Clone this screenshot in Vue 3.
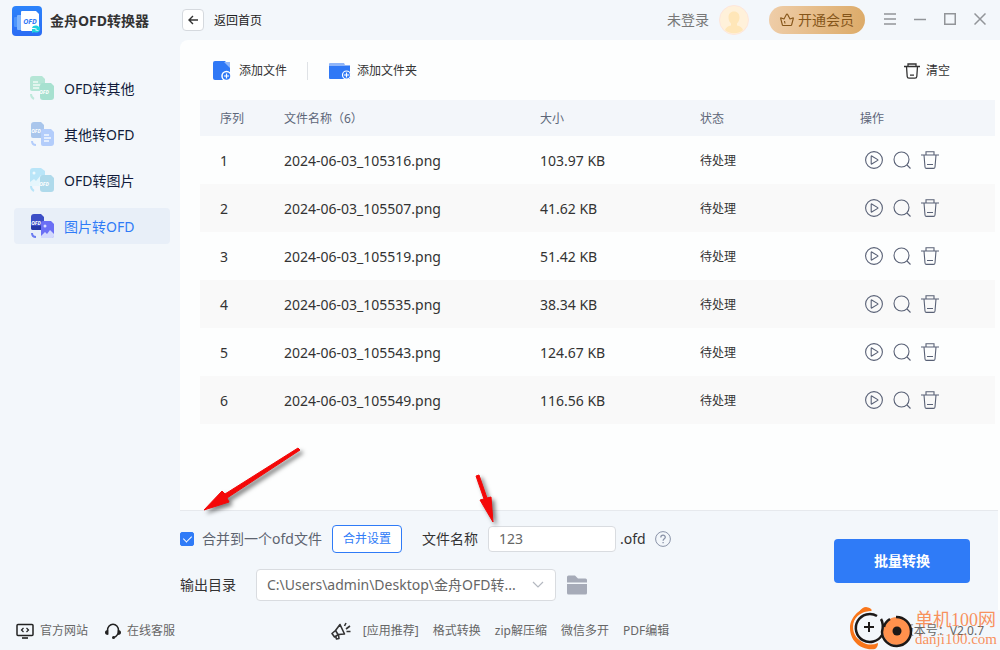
<script setup>
import { ref } from 'vue'

const menu = [
  { label: 'OFD转其他', icon: 'ofd-other' },
  { label: '其他转OFD', icon: 'other-ofd' },
  { label: 'OFD转图片', icon: 'ofd-image' },
  { label: '图片转OFD', icon: 'image-ofd' }
]
const active = ref(3)

const files = ref([
  { name: '2024-06-03_105316.png', size: '103.97 KB', status: '待处理' },
  { name: '2024-06-03_105507.png', size: '41.62 KB', status: '待处理' },
  { name: '2024-06-03_105519.png', size: '51.42 KB', status: '待处理' },
  { name: '2024-06-03_105535.png', size: '38.34 KB', status: '待处理' },
  { name: '2024-06-03_105543.png', size: '124.67 KB', status: '待处理' },
  { name: '2024-06-03_105549.png', size: '116.56 KB', status: '待处理' }
])

const merge = ref(true)
const fileName = ref('123')
const apps = ['[应用推荐]', '格式转换', 'zip解压缩', '微信多开', 'PDF编辑']
</script>

<template>
  <div class="app">
    <header class="titlebar">
      <div class="brand">
        <svg class="logo" viewBox="0 0 30 30" aria-hidden="true">
          <defs>
            <linearGradient id="lg-logo" x1="0" y1="0" x2="0" y2="1">
              <stop offset="0" stop-color="#2b83fb" /><stop offset="1" stop-color="#2b6cf4" />
            </linearGradient>
          </defs>
          <rect width="30" height="30" rx="4" fill="url(#lg-logo)" />
          <rect x="2" y="11" width="4" height="10" rx="1" fill="#4d95fb" />
          <rect x="5" y="9" width="6" height="15" rx="1" fill="#7db4fd" />
          <path d="M10 5h14l3 3v16a1 1 0 0 1-1 1H10a1 1 0 0 1-1-1V6a1 1 0 0 1 1-1z" fill="#fff" />
          <text x="18" y="18" text-anchor="middle" class="logo-text">OFD</text>
          <path d="M20 22c1-3 5-3 7-1l1-1v4h-4l1-1c-1-1-3-1-4-1zM28 24c-1 3-5 3-6 2l-2 1v-4h4l-1 1c1 1 3 1 5 0z" fill="#1fd2df" />
        </svg>
        <strong>金舟OFD转换器</strong>
      </div>
      <button class="back" type="button">
        <span class="back-box">
          <svg width="12" height="12" viewBox="0 0 12 12"><path d="M6 2 2 6l4 4M2 6h9" fill="none" stroke="#333" stroke-width="1.4" /></svg>
        </span>
        <span class="label">返回首页</span>
      </button>
      <div class="account">
        <a href="#" class="login">未登录</a>
        <svg class="avatar" viewBox="0 0 30 30" aria-hidden="true">
          <circle cx="15" cy="15" r="14.5" fill="#fff1da" stroke="#fde6dc" />
          <path d="M15 6.500c3.500 0 5.500 2.500 5.500 6 0 2.500-1 4.500-2.500 6v2c3 .5 5 2 6 4.500a14 14 0 0 1-18 0c1-2.500 3-4 6-4.500v-2c-1.500-1.500-2.500-3.500-2.500-6 0-3.500 2-6 5.500-6z" fill="#ffe6b8" />
        </svg>
        <button class="vip" type="button">
          <svg width="14" height="14" viewBox="0 0 14 14"><path d="M3 12.500q-.5 0-.6-.5L.7 5.500q-.2-.9.600-.6L4 6 6.400 1.400q.6-.8 1.200 0L10 6l2.700-1.100q.8-.3.600.6L11.600 12q-.1.500-.6.500zM4.500 8l.5 2.500" fill="none" stroke="#855519" stroke-width="1.100" stroke-linejoin="round" /></svg>
          开通会员
        </button>
        <div class="window-buttons">
          <button type="button" aria-label="菜单"><svg width="12" height="12" viewBox="0 0 12 12"><path d="M0 1h12M0 6h12M0 11h12" /></svg></button>
          <button type="button" aria-label="最小化"><svg width="12" height="12" viewBox="0 0 12 12"><path d="M0 6.500h12" /></svg></button>
          <button type="button" aria-label="最大化"><svg width="12" height="12" viewBox="0 0 12 12"><path d="M.75.75h10.500v10.500H.75z" /></svg></button>
          <button type="button" aria-label="关闭"><svg width="12" height="12" viewBox="0 0 12 12"><path d="m.5.500 11 11M11.500.500l-11 11" /></svg></button>
        </div>
      </div>
    </header>

    <div class="body">
      <nav class="sidebar">
        <button
          v-for="(item, i) in menu"
          :key="item.label"
          type="button"
          class="menu-item"
          :class="{ active: i === active }"
          @click="active = i"
        >
          <svg v-if="item.icon === 'ofd-other'" width="24" height="24" viewBox="0 0 24 24">
            <path d="M3 0h9l3 3v12H2a2 2 0 0 1-2-2V3a3 3 0 0 1 3-3z" fill="#b5e6d6" />
            <path d="M3 6h5M3 9h8M3 12h6" stroke="#f0faf6" stroke-width="1.500" />
            <path d="M13 7h8l3 3v11a3 3 0 0 1-3 3h-8a3 3 0 0 1-3-3V10a3 3 0 0 1 3-3z" fill="#a7e1d0" />
            <text x="14" y="18" text-anchor="middle" class="tag">OFD</text>
            <path d="M1 18c0 3 1 4 3 5" fill="none" stroke="#bfe9dc" stroke-width="2" />
          </svg>
          <svg v-else-if="item.icon === 'other-ofd'" width="24" height="24" viewBox="0 0 24 24">
            <path d="M4 0h7l3 3v13H3a2 2 0 0 1-2-2V3a3 3 0 0 1 3-3z" fill="#a9c6ec" />
            <text x="6" y="11" text-anchor="middle" class="tag">OFD</text>
            <path d="M13 7h8l3 3v11a3 3 0 0 1-3 3h-8a2 2 0 0 1-2-2V9a2 2 0 0 1 2-2z" fill="#b3cdfb" />
            <path d="M14 13h5M14 16h7M14 19h5" stroke="#f5f9ff" stroke-width="1.500" />
            <path d="M2 19c0 3 1 4 4 4" fill="none" stroke="#b3cdfb" stroke-width="2" />
          </svg>
          <svg v-else-if="item.icon === 'ofd-image'" width="24" height="24" viewBox="0 0 24 24">
            <path d="M3 0h8l4 3v12H0V3a3 3 0 0 1 3-3z" fill="#b9e5f8" />
            <circle cx="4" cy="5" r="1.500" fill="#eef9fe" />
            <path d="m0 14 4-3 2 2 5-6 4 5v6H0z" fill="#e6f6fc" />
            <path d="M13 7h8l3 3v11a3 3 0 0 1-3 3h-8a3 3 0 0 1-3-3V10a3 3 0 0 1 3-3z" fill="#afdaeb" />
            <text x="14" y="18" text-anchor="middle" class="tag">OFD</text>
            <path d="M1 18c0 3 1 4 3 5" fill="none" stroke="#b9e5f8" stroke-width="2" />
          </svg>
          <svg v-else width="24" height="24" viewBox="0 0 24 24">
            <path d="M4 0h7l3 3v13H3a2 2 0 0 1-2-2V3a3 3 0 0 1 3-3z" fill="#3c4ec6" />
            <path d="M1 12h13v4H3a2 2 0 0 1-2-2z" fill="#2739a8" />
            <text x="6" y="11" text-anchor="middle" class="tag">OFD</text>
            <path d="M13 7h8l3 3v11a3 3 0 0 1-3 3H11V9a2 2 0 0 1 2-2z" fill="#6b6ff5" />
            <circle cx="15" cy="12" r="1.500" fill="#d8dcff" />
            <path d="m11 22 4-4 2 2 3-4 4 4v2a2 2 0 0 1-2 2H11z" fill="#d3d9fd" />
            <path d="M2 19c0 3 1 4 4 4" fill="none" stroke="#6b7cf0" stroke-width="2" />
          </svg>
          <span class="label">{{ item.label }}</span>
        </button>
      </nav>

      <main class="main">
        <div class="toolbar">
          <button type="button" class="tool">
            <svg width="18" height="20" viewBox="0 0 18 20">
              <path d="M2 0h10l5 6v12a1 1 0 0 1-1 1H2a2 2 0 0 1-2-2V2a2 2 0 0 1 2-2z" fill="#2f78f6" />
              <path d="M11 1h6v6z" fill="#94b9f9" />
              <circle cx="13.500" cy="15" r="4.500" fill="#2f78f6" stroke="#fff" stroke-width="1.500" />
              <path d="M11 15h5M13.500 12.500v5" stroke="#fff" stroke-width="1.200" />
            </svg>
            添加文件
          </button>
          <span class="divider"></span>
          <button type="button" class="tool folder">
            <svg width="22" height="18" viewBox="0 0 22 18">
              <path d="M1 1h14l1 2h5v6H0V2a1 1 0 0 1 1-1z" fill="#8fb5f9" />
              <path d="M0 4h21v12a1 1 0 0 1-1 1H1a1 1 0 0 1-1-1z" fill="#2f78f6" />
              <circle cx="17.500" cy="13" r="4" fill="#2f78f6" stroke="#fff" stroke-width="1.200" />
              <path d="M15 13h5M17.500 10.500v5" stroke="#fff" stroke-width="1.200" />
            </svg>
            添加文件夹
          </button>
          <button type="button" class="tool clear">
            <svg width="16" height="16" viewBox="0 0 16 16"><path d="M0 3.500h16M4 3V1h8v2M2.500 3.500l.7 10q.1 1.700 1.800 1.700h6q1.700 0 1.800-1.700l.7-10M6 12.200h4" fill="none" stroke="#333" stroke-width="1.300" /></svg>
            清空
          </button>
        </div>

        <table class="files">
          <colgroup><col class="c-no" /><col class="c-name" /><col class="c-mid" /><col class="c-mid" /><col /></colgroup>
          <thead>
            <tr><th>序列</th><th>文件名称（{{ files.length }}）</th><th>大小</th><th>状态</th><th>操作</th></tr>
          </thead>
          <tbody>
            <tr v-for="(f, i) in files" :key="f.name">
              <td>{{ i + 1 }}</td>
              <td>{{ f.name }}</td>
              <td>{{ f.size }}</td>
              <td class="status">{{ f.status }}</td>
              <td class="action-cell">
                <div class="actions">
                  <button type="button" aria-label="开始"><svg width="18" height="18" viewBox="0 0 18 18"><circle cx="9" cy="9" r="8.400" /><path d="M6.200 5.200v7.600q0 .5.500.2l6-3.600q.5-.4 0-.8l-6-3.600q-.5-.3-.5.2z" /></svg></button>
                  <button type="button" aria-label="预览"><svg width="18" height="18" viewBox="0 0 18 18"><circle cx="8.500" cy="8.500" r="7.500" /><path d="m14 14 3.500 3.500" /></svg></button>
                  <button type="button" aria-label="删除"><svg width="18" height="18" viewBox="0 0 18 18"><path d="M0 4h18M5 4V.800h8V4M3 4l1 12q.1 1.400 1.500 1.400h7q1.400 0 1.500-1.400L15 4M6 13.500h6" /></svg></button>
                </div>
              </td>
            </tr>
          </tbody>
        </table>

        <section class="settings">
          <div class="fields">
            <div class="row">
              <label class="merge"><input v-model="merge" type="checkbox" />合并到一个ofd文件</label>
              <button type="button" class="merge-set">合并设置</button>
              <label for="file-name">文件名称</label>
              <input id="file-name" v-model="fileName" class="name-input" type="text" />
              <span class="ext">.ofd</span>
              <button type="button" aria-label="帮助">
                <svg width="16" height="16" viewBox="0 0 16 16"><circle cx="8" cy="8" r="7.400" fill="none" stroke="#8a93a8" /><path d="M5.800 6.400c0-3 4.500-3 4.500-.2 0 1.600-2.200 1.600-2.200 3.500M8.100 11v1.300" fill="none" stroke="#8a93a8" stroke-width="1.300" /></svg>
              </button>
            </div>
            <div class="row second">
              <label for="out-dir" class="dir-label">输出目录</label>
              <div class="select-box">
                <select id="out-dir"><option>C:\Users\admin\Desktop\金舟OFD转...</option></select>
                <svg width="12" height="8" viewBox="0 0 12 8"><path d="m1 1 5 5 5-5" fill="none" stroke="#b4b8c0" stroke-width="1.200" /></svg>
              </div>
              <button type="button" aria-label="打开目录">
                <svg width="20" height="20" viewBox="0 0 20 20"><path d="M1.500.500h6.500l3 3h7.500a1.500 1.500 0 0 1 1.500 1.500v2.500H0V2A1.500 1.500 0 0 1 1.500.500zM0 9h20v9a1.500 1.500 0 0 1-1.500 1.500h-17A1.500 1.500 0 0 1 0 18z" fill="#a6abb8" /></svg>
              </button>
            </div>
          </div>
          <button type="button" class="convert">批量转换</button>
        </section>
      </main>
    </div>

    <footer class="footer">
      <div class="links">
        <a href="#">
          <svg width="18" height="16" viewBox="0 0 18 16"><rect x="1" y="1.500" width="16" height="11" rx="1" fill="none" stroke="#222" stroke-width="1.500" /><path d="M6 15h6" stroke="#222" stroke-width="1.600" /><path d="M7.500 5 5.500 7l2 2M10.500 5l2 2-2 2" fill="none" stroke="#222" stroke-width="1.200" /></svg>
          官方网站
        </a>
        <a href="#">
          <svg width="16" height="16" viewBox="0 0 16 16"><path d="M2.500 11V7.500a5.500 6.200 0 0 1 11 0c0 4-1.500 6-5 7" fill="none" stroke="#222" stroke-width="1.500" /><path d="M3.300 7v5C.800 12 0 11 0 9.500S.800 7 3.300 7zM12.700 7v5c2.500 0 3.300-1 3.300-2.500S15.200 7 12.700 7z" fill="#222" /><circle cx="8.500" cy="14.500" r="1.500" fill="#222" /></svg>
          在线客服
        </a>
      </div>
      <div class="apps">
        <svg width="20" height="18" viewBox="0 0 20 18"><g fill="none" stroke="#333" stroke-width="1.600" stroke-linejoin="round"><path d="M9 2.500 13.500 12l-6 .5-4 2.500L1 11.500 4.500 8.500z" /><path d="m4.500 14 1 3 2.500-.5-.5-3.500M4.500 8.500l2.500 4M13.500 4 15 1M15 7l4-3M15.500 9.500h4" /></g></svg>
        <a v-for="a in apps" :key="a" href="#">{{ a }}</a>
      </div>
      <span class="version">版本号：V2.0.7</span>
    </footer>

    <svg class="arrow arrow-left" width="110" height="76" viewBox="0 0 110 76" aria-hidden="true">
      <path d="M102 2 29 48 26 45 8 64 33 56 31 52 104 4z" fill="#f40808" stroke="#f40808" stroke-linejoin="round" />
    </svg>
    <svg class="arrow arrow-right" width="36" height="60" viewBox="0 0 36 60" aria-hidden="true">
      <path d="M6 5 14 28 10 29 23 51 21 26 17 27 9 4z" fill="#f40808" stroke="#f40808" stroke-linejoin="round" />
    </svg>

    <div class="watermark">
      <svg width="64" height="44" viewBox="0 0 64 44" aria-hidden="true">
        <path d="M21 3C16-1 0 8 0 22c0 13 11 23 25 21q3-2 3-6c-5 2-10 2-14 0C8 34 3 29 3 21 3 12 10 6 19 5z" fill="#f9761a" />
        <path d="M9 6q6-9 13-2l-1 1z" fill="#f9761a" />
        <path d="M27 10a14 14 0 1 0 5 19" fill="none" stroke="#1c1918" stroke-width="2.500" />
        <path d="M14 21h10M19 16v10" stroke="#1c1918" stroke-width="2" />
        <circle cx="47" cy="25" r="14" fill="#ff914d" />
        <path d="M31 13q3 5 1 13a14.500 14.500 0 1 0 14-15M34 21q1-5 6-8" fill="none" stroke="#1c1918" stroke-width="2.500" />
        <circle cx="47" cy="25" r="4.500" fill="#1c1918" />
      </svg>
      <div class="watermark-text"><span>单机100网</span><span class="domain">danji100.com</span></div>
    </div>
  </div>
</template>

<style>
body {
  margin: 0;
}
</style>

<style scoped>
.app {
  position: relative;
  display: flex;
  flex-direction: column;
  min-height: 100vh;
  overflow: hidden;
  background: #f3f7fb;
  color: #333;
  font: 12px/18px "Noto Sans", "Noto Sans CJK SC", sans-serif;
}
.app * {
  box-sizing: border-box;
}
button,
input,
select {
  margin: 0;
  padding: 0;
  border: 0;
  background: none;
  color: inherit;
  font: inherit;
}
a {
  color: inherit;
  text-decoration: none;
}
svg {
  display: block;
  flex: none;
}
.label {
  padding-top: 2px;
}

.titlebar {
  display: flex;
  align-items: center;
  height: 40px;
  padding-right: 14px;
}
.brand {
  display: flex;
  align-items: center;
  gap: 8px;
  width: 180px;
  padding: 2px 0 0 12px;
  font-size: 14px;
}
.logo {
  width: 30px;
  height: 30px;
}
.logo-text {
  fill: #2f78f6;
  font: italic bold 7px "Noto Sans", sans-serif;
}
.back {
  display: flex;
  align-items: center;
  gap: 10px;
  padding-left: 2px;
  color: #222;
}
.back-box {
  display: grid;
  place-items: center;
  width: 22px;
  height: 22px;
  border: 1px solid #d5d9de;
  border-radius: 4px;
  background: #fff;
}
.account {
  display: flex;
  align-items: center;
  margin-left: auto;
  font-size: 14px;
}
.login {
  color: #777;
}
.avatar {
  width: 30px;
  height: 30px;
  margin: 0 20px 0 10px;
}
.vip {
  display: flex;
  align-items: center;
  gap: 4px;
  height: 28px;
  padding: 0 11px;
  border-radius: 14px;
  background: linear-gradient(100deg, #efceaa, #dcaa67);
  color: #855519;
}
.window-buttons {
  display: flex;
  gap: 18px;
  margin-left: 19px;
  padding-bottom: 2px;
}
.window-buttons svg {
  fill: none;
  stroke: #929599;
  stroke-width: 1.5;
}

.body {
  display: flex;
  flex: 1;
}
.sidebar {
  display: flex;
  flex-direction: column;
  gap: 10px;
  width: 180px;
  padding: 30px 10px 0 14px;
}
.menu-item {
  display: flex;
  align-items: center;
  gap: 10px;
  height: 36px;
  padding-left: 16px;
  border-radius: 4px;
  color: #111b3a;
  font-size: 14px;
}
.menu-item.active {
  background: #e8eff8;
  color: #2f7bf7;
}
.tag {
  fill: #fff;
  font: italic bold 5px "Noto Sans", sans-serif;
}

.main {
  display: flex;
  flex: 1;
  flex-direction: column;
  min-width: 0;
  border-top-left-radius: 8px;
  background: #fdfefe;
}
.toolbar {
  display: flex;
  align-items: center;
  height: 60px;
  padding: 2px 50px 0 33px;
}
.tool {
  display: flex;
  align-items: center;
  gap: 8px;
}
.divider {
  width: 1px;
  height: 18px;
  margin: 0 21px 0 20px;
  background: #dfe2e6;
}
.clear {
  margin-left: auto;
}
.folder,
.clear {
  gap: 6px;
}

.files {
  margin: 0 5px 0 20px;
  border-collapse: collapse;
  table-layout: fixed;
}
.c-no {
  width: 64px;
}
.c-name {
  width: 256px;
}
.c-mid {
  width: 160px;
}
.files th {
  height: 36px;
  padding: 2px 0 0 20px;
  background: #f3f6fa;
  color: #5d6679;
  font-weight: 400;
  text-align: left;
}
.files td {
  height: 48px;
  padding: 2px 0 0 20px;
  font-size: 14px;
}
.files tbody tr:nth-child(even) {
  background: #f9f9f9;
}
.files .status {
  font-size: 12px;
}
.files .action-cell {
  padding-top: 0;
}
.actions {
  display: flex;
  gap: 10px;
  padding-left: 5px;
}
.actions svg {
  fill: none;
  stroke: #596176;
  stroke-width: 1.1;
}

.settings {
  display: flex;
  align-items: center;
  justify-content: space-between;
  height: 100px;
  margin: auto 2px 0 0;
  padding-right: 28px;
  border-top: 1px solid #e6e9ed;
  background: #f3f7fb;
}
.fields {
  padding-top: 4px;
}
.row {
  display: flex;
  align-items: center;
  height: 28px;
  font-size: 14px;
}
.second {
  height: 32px;
  margin-top: 16px;
}
.merge {
  display: flex;
  align-items: center;
  gap: 8px;
  color: #5d6470;
}
.merge input {
  display: grid;
  place-items: center;
  width: 14px;
  height: 14px;
  border: 1px solid #2f7bf7;
  border-radius: 2px;
  appearance: none;
}
.merge input:checked {
  background: #2f7bf7;
}
.merge input:checked::before {
  width: 4px;
  height: 7px;
  margin-bottom: 2px;
  border: solid #fff;
  border-width: 0 1px 1px 0;
  content: "";
  transform: rotate(45deg);
}
.merge-set {
  width: 70px;
  height: 28px;
  margin: 0 20px 0 10px;
  border: 1px solid #2f7bf7;
  border-radius: 4px;
  background: #fff;
  color: #2f7bf7;
  font-size: 12px;
}
.name-input {
  width: 128px;
  height: 26px;
  margin: 0 4px 0 10px;
  padding: 0 10px;
  border: 1px solid #d9dce0;
  border-radius: 4px;
  background: #fff;
  color: #666;
}
.ext {
  margin-right: 9px;
}
.dir-label {
  width: 76px;
}
.select-box {
  display: grid;
  align-items: center;
  width: 300px;
  margin-right: 11px;
}
.select-box select,
.select-box svg {
  grid-area: 1 / 1;
}
.select-box svg {
  justify-self: end;
  margin-right: 12px;
  pointer-events: none;
}
.select-box select {
  width: 100%;
  height: 32px;
  padding: 0 32px 0 10px;
  border: 1px solid #d9dce0;
  border-radius: 4px;
  background: #fff;
  color: #666;
  appearance: none;
}
.convert {
  width: 136px;
  height: 44px;
  border-radius: 4px;
  background: #2f7bf7;
  color: #fff;
  font-size: 14px;
  font-weight: 700;
}

.footer {
  display: grid;
  grid-template-columns: 1fr auto 1fr;
  align-items: center;
  height: 40px;
  padding: 2px 16px 0;
  color: #666;
}
.links,
.links a,
.apps {
  display: flex;
  align-items: center;
}
.links {
  gap: 17px;
}
.links a {
  gap: 6px;
}
.apps svg {
  margin-right: 12px;
}
.apps a + a {
  margin-left: 14px;
}
.version {
  justify-self: end;
}

/* Callouts and watermark lie over the window. */
.arrow {
  position: absolute;
  filter: drop-shadow(3px 3px 2px rgba(0, 0, 0, 0.5));
  pointer-events: none;
}
.arrow-left {
  top: 446px;
  left: 196px;
}
.arrow-right {
  top: 471px;
  left: 470px;
}
.watermark {
  position: absolute;
  right: 3px;
  bottom: 0;
  display: flex;
  align-items: center;
  gap: 1px;
  pointer-events: none;
}
.watermark-text {
  display: flex;
  flex-direction: column;
  padding-top: 2px;
  color: rgba(249, 118, 50, 0.8);
  font: 18px/20px "Liberation Serif", "Noto Sans CJK SC", serif;
}
.domain {
  font-size: 15px;
  line-height: 18px;
}
</style>
